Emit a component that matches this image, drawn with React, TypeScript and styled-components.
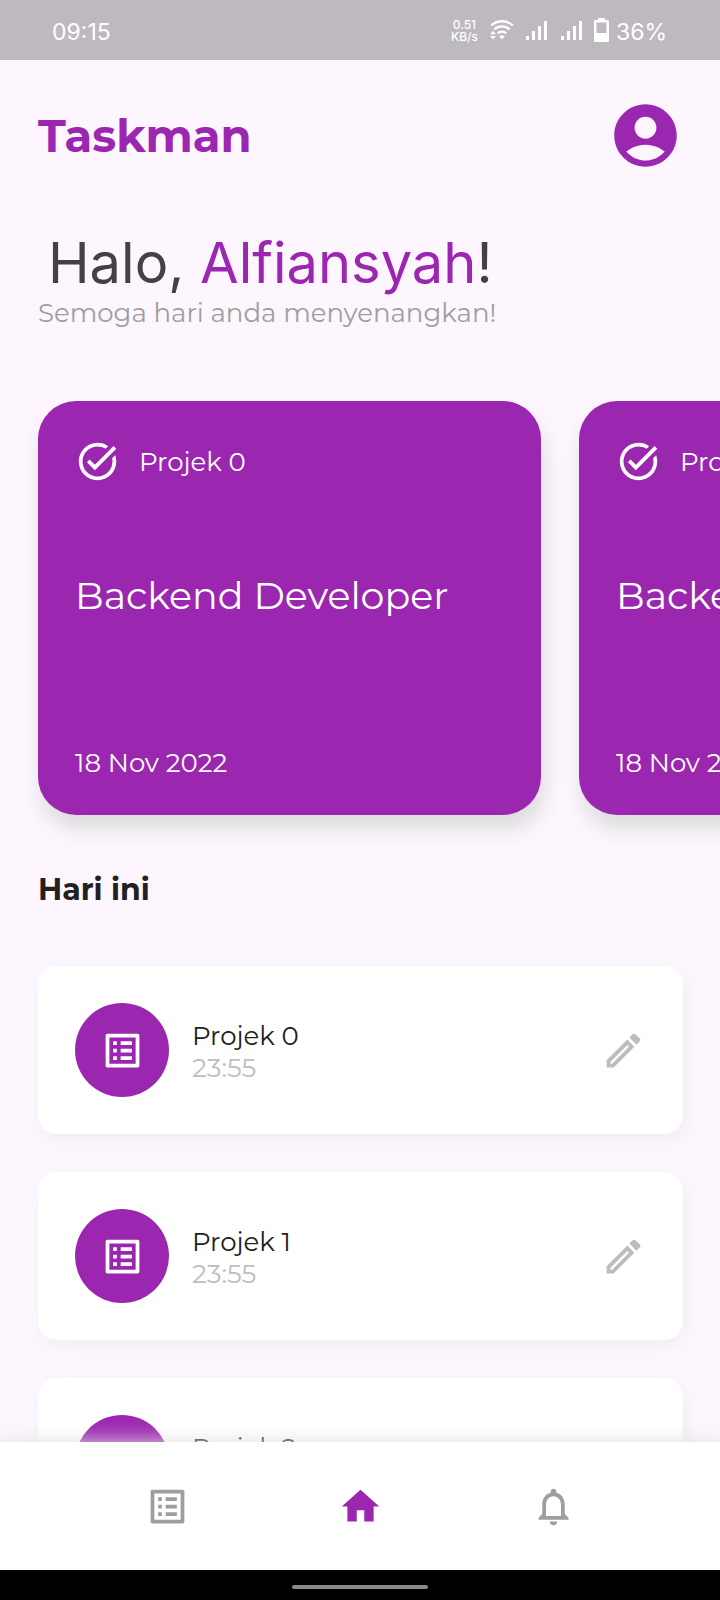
import React from "react";
import styled, { createGlobalStyle } from "styled-components";
import {
  MdAccountCircle,
  MdHome,
  MdOutlineEdit,
  MdOutlineListAlt,
  MdOutlineNotifications,
  MdTaskAlt,
} from "react-icons/md";

const color = {
  primary: "#9b27b0",
  page: "#fdf6ff",
  statusBar: "#beb8bf",
  ink: "#212121",
  heading: "#424242",
  muted: "#9e9e9e",
  faint: "#bdbdbd",
};

const GlobalStyle = createGlobalStyle`
  *, *::before, *::after { box-sizing: border-box; }
  body {
    margin: 0;
    background: ${color.page};
    color: ${color.ink};
    font-family: Montserrat, "Open Sans", sans-serif;
    font-size: 26px;
    font-weight: 400;
    line-height: 32px;
  }
  h1, h2, h3, p, ul { margin: 0; padding: 0; }
  ul { list-style: none; }
  button {
    display: grid;
    place-items: center;
    padding: 0;
    border: 0;
    background: none;
    cursor: pointer;
  }
`;

const Screen = styled.div`
  display: flex;
  flex-direction: column;
  height: 100vh;
`;

const StatusBar = styled.div`
  display: flex;
  flex: none;
  align-items: center;
  justify-content: space-between;
  height: 60px;
  padding: 4px 53px 0 52px;
  background: ${color.statusBar};
  color: #fff;
  font-family: Inter, Roboto, sans-serif;
  font-size: 23px;
`;

const StatusGroup = styled.div`
  display: flex;
  align-items: center;
`;

const NetSpeed = styled.span`
  display: flex;
  flex-direction: column;
  align-items: center;
  padding-bottom: 2px;
  font-size: 12px;
  font-weight: 500;
  line-height: 12px;
`;

const StatusIcon = styled.svg<{ $gap: number }>`
  flex: none;
  margin-left: ${(p) => p.$gap}px;
  margin-bottom: 4px;
`;

const BatteryLevel = styled.span`
  margin-left: 7px;
`;

const Content = styled.main`
  flex: 1;
  min-height: 0;
  overflow-y: auto;
  scrollbar-width: none;
`;

const Header = styled.header`
  display: flex;
  align-items: center;
  justify-content: space-between;
  padding: 38px 37px 0 38px;
`;

const Brand = styled.h1`
  color: ${color.primary};
  font-size: 45px;
  font-weight: 700;
  line-height: 56px;
`;

const Greeting = styled.section`
  padding: 56px 38px 0;
`;

const Hello = styled.h2`
  padding-left: 10px;
  color: ${color.heading};
  font-family: Inter, sans-serif;
  font-size: 56px;
  font-weight: 400;
  line-height: 68px;
`;

const UserName = styled.span`
  color: ${color.primary};
`;

const Wish = styled.p`
  color: ${color.muted};
`;

const Carousel = styled.ul`
  display: flex;
  gap: 38px;
  margin-top: 34px;
  padding: 38px;
  overflow-x: auto;
  scrollbar-width: none;
`;

const ProjectCard = styled.li`
  display: flex;
  flex: none;
  flex-direction: column;
  width: 503px;
  height: 414px;
  padding: 38px 37px 36px;
  border-radius: 38px;
  background: ${color.primary};
  box-shadow: 3px 14px 20px #dcdcdc;
  color: #fff;
`;

const CardTop = styled.div`
  display: flex;
  align-items: center;
  gap: 19px;
`;

const CardTitle = styled.h3`
  margin-top: 89px;
  font-size: 38px;
  font-weight: 400;
  line-height: 46px;
`;

const CardDate = styled.p`
  margin-top: auto;
`;

const SectionTitle = styled.h2`
  padding: 18px 38px 0;
  font-size: 30px;
  font-weight: 700;
  line-height: 38px;
`;

const TaskList = styled.ul`
  display: flex;
  flex-direction: column;
  gap: 38px;
  padding: 57px 37px 38px 38px;
`;

const TaskRow = styled.li`
  display: flex;
  align-items: center;
  gap: 23px;
  padding: 37px;
  border-radius: 19px;
  background: #fff;
  box-shadow: 3px 6px 16px #f0eef0;
`;

const TaskBadge = styled.span`
  display: grid;
  flex: none;
  place-items: center;
  width: 94px;
  height: 94px;
  border-radius: 50%;
  background: ${color.primary};
  color: #fff;
`;

const TaskText = styled.div`
  flex: 1;
  padding-top: 4px;
`;

const TaskTime = styled.p`
  color: ${color.faint};
`;

const EditButton = styled.button`
  color: ${color.faint};
`;

const ProfileButton = styled.button`
  color: ${color.primary};
`;

const BottomNav = styled.nav`
  position: relative;
  display: flex;
  flex: none;
  align-items: center;
  justify-content: space-evenly;
  height: 128px;
  background: #fff;
  box-shadow: 0 0 20px #e0e0e0;
`;

const NavButton = styled.button<{ $active?: boolean }>`
  width: 52px;
  height: 52px;
  color: ${(p) => (p.$active ? color.primary : color.muted)};
`;

const GestureBar = styled.div`
  position: relative;
  display: flex;
  flex: none;
  justify-content: center;
  height: 30px;
  padding-top: 15px;
  background: #000;
`;

const GestureHandle = styled.span`
  width: 136px;
  height: 4px;
  border-radius: 2px;
  background: #8c898c;
`;

function WifiIcon() {
  return (
    <StatusIcon $gap={12} width="24" height="20" viewBox="0 0 24 20" aria-hidden="true">
      <g fill="none" stroke="#fff" strokeWidth="2.4">
        <path d="M1.2 5.4C7.6-.1 16.4-.1 22.8 5.4" />
        <path d="M4.3 9.3C8.8 5.4 15.2 5.4 19.7 9.3" />
        <path d="M7.6 13.4C10.2 11 13.8 11 16.4 13.4" />
      </g>
      <path
        fill="#fff"
        d="M9.2 16.3Q12 14.3 14.8 16.3L12 19.6ZM0 14.3 3 10.8 6 14.3ZM0 15.9H6L3 19.4Z"
      />
    </StatusIcon>
  );
}

function SignalIcon({ gap }: { gap: number }) {
  return (
    <StatusIcon $gap={gap} width="21" height="20" viewBox="0 0 21 20" fill="#fff" aria-hidden="true">
      <rect x="0" y="16" width="3" height="4" />
      <rect x="6" y="11" width="3" height="9" />
      <rect x="12" y="6" width="3" height="14" />
      <rect x="18" y="1" width="3" height="19" />
    </StatusIcon>
  );
}

function BatteryIcon() {
  return (
    <StatusIcon $gap={12} width="15" height="24" viewBox="0 0 15 24" aria-hidden="true">
      <path
        fill="#fff"
        fillRule="evenodd"
        d="M4 0h7v2h2.5q1.5 0 1.5 1.5v19q0 1.5-1.5 1.5h-12q-1.5 0-1.5-1.5v-19q0-1.500 1.500-1.500h2.500zM2.500 4.500v10.500h10v-10.500z"
      />
    </StatusIcon>
  );
}

const projects = [
  { id: 1, name: "Projek 0", title: "Backend Developer", date: "18 Nov 2022" },
  { id: 2, name: "Projek 1", title: "Backend Developer", date: "18 Nov 2022" },
];

const tasks = [
  { name: "Projek 0", time: "23:55" },
  { name: "Projek 1", time: "23:55" },
  { name: "Projek 2", time: "23:55" },
];

export default function App() {
  return (
    <Screen>
      <GlobalStyle />
      <StatusBar>
        <time>09:15</time>
        <StatusGroup>
          <NetSpeed>
            <span>0.51</span>
            <span>KB/s</span>
          </NetSpeed>
          <WifiIcon />
          <SignalIcon gap={12} />
          <SignalIcon gap={14} />
          <BatteryIcon />
          <BatteryLevel>36%</BatteryLevel>
        </StatusGroup>
      </StatusBar>

      <Content>
        <Header>
          <Brand>Taskman</Brand>
          <ProfileButton type="button" aria-label="Profil">
            <MdAccountCircle size={75} />
          </ProfileButton>
        </Header>

        <Greeting>
          <Hello>
            Halo, <UserName>Alfiansyah</UserName>!
          </Hello>
          <Wish>Semoga hari anda menyenangkan!</Wish>
        </Greeting>

        <Carousel>
          {projects.map((project) => (
            <ProjectCard key={project.id}>
              <CardTop>
                <MdTaskAlt size={45} />
                <p>{project.name}</p>
              </CardTop>
              <CardTitle>{project.title}</CardTitle>
              <CardDate>{project.date}</CardDate>
            </ProjectCard>
          ))}
        </Carousel>

        <SectionTitle>Hari ini</SectionTitle>
        <TaskList>
          {tasks.map((task) => (
            <TaskRow key={task.name}>
              <TaskBadge>
                <MdOutlineListAlt size={45} />
              </TaskBadge>
              <TaskText>
                <p>{task.name}</p>
                <TaskTime>{task.time}</TaskTime>
              </TaskText>
              <EditButton type="button" aria-label={`Ubah ${task.name}`}>
                <MdOutlineEdit size={45} />
              </EditButton>
            </TaskRow>
          ))}
        </TaskList>
      </Content>

      <BottomNav>
        <NavButton type="button" aria-label="Daftar tugas">
          <MdOutlineListAlt size={45} />
        </NavButton>
        <NavButton type="button" aria-label="Beranda" $active>
          <MdHome size={45} />
        </NavButton>
        <NavButton type="button" aria-label="Notifikasi">
          <MdOutlineNotifications size={45} />
        </NavButton>
      </BottomNav>
      <GestureBar>
        <GestureHandle />
      </GestureBar>
    </Screen>
  );
}
